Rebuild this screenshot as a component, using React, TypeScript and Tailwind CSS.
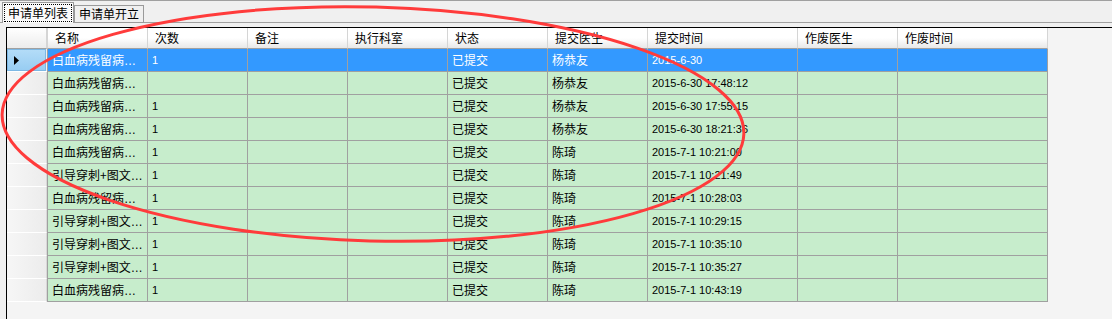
import React from "react";

const cjk = '"Noto Sans CJK SC", "Liberation Sans", sans-serif';
const lat = '"Liberation Sans", "Noto Sans CJK SC", sans-serif';

type Row = [string, string, string, string, string, string, string, string, string];

const rows: Row[] = [
  ["白血病残留病…", "1", "", "", "已提交", "杨恭友", "2015-6-30", "", ""],
  ["白血病残留病…", "", "", "", "已提交", "杨恭友", "2015-6-30 17:48:12", "", ""],
  ["白血病残留病…", "1", "", "", "已提交", "杨恭友", "2015-6-30 17:55:15", "", ""],
  ["白血病残留病…", "1", "", "", "已提交", "杨恭友", "2015-6-30 18:21:36", "", ""],
  ["白血病残留病…", "1", "", "", "已提交", "陈琦", "2015-7-1 10:21:00", "", ""],
  ["引导穿刺+图文…", "1", "", "", "已提交", "陈琦", "2015-7-1 10:21:49", "", ""],
  ["白血病残留病…", "1", "", "", "已提交", "陈琦", "2015-7-1 10:28:03", "", ""],
  ["引导穿刺+图文…", "1", "", "", "已提交", "陈琦", "2015-7-1 10:29:15", "", ""],
  ["引导穿刺+图文…", "1", "", "", "已提交", "陈琦", "2015-7-1 10:35:10", "", ""],
  ["引导穿刺+图文…", "1", "", "", "已提交", "陈琦", "2015-7-1 10:35:27", "", ""],
  ["白血病残留病…", "1", "", "", "已提交", "陈琦", "2015-7-1 10:43:19", "", ""],
];

const headers = ["名称", "次数", "备注", "执行科室", "状态", "提交医生", "提交时间", "作废医生", "作废时间"];
const widths = ["w-[100px]", "w-[100px]", "w-[100px]", "w-[100px]", "w-[100px]", "w-[100px]", "w-[150px]", "w-[100px]", "w-[151px]"];

function isAscii(s: string) {
  return /^[\x00-\x7f]*$/.test(s);
}

function CellText({ text, selected }: { text: string; selected: boolean }) {
  if (!text) return null;
  const color = selected ? "text-white" : "text-black";
  if (isAscii(text)) {
    return (
      <span className={`whitespace-nowrap text-[11px] ${color}`} style={{ fontFamily: lat }}>
        {text}
      </span>
    );
  }
  const hasEllipsis = text.endsWith("…");
  const body = hasEllipsis ? text.slice(0, -1) : text;
  return (
    <span className={`whitespace-nowrap text-[12px] ${color}`} style={{ fontFamily: cjk }}>
      {body}
      {hasEllipsis && (
        <span className="text-[12px]" style={{ fontFamily: lat }}>
          …
        </span>
      )}
    </span>
  );
}

export default function App() {
  return (
    <div className="relative w-[1112px] h-[319px] overflow-hidden bg-[#f0f0f0] border-t border-[#a0a0a0]" style={{ fontFamily: cjk }}>
      {/* tabs */}
      <div className="flex items-end h-[22px]">
        <div className="w-[2px] h-full border-b border-[#a0a0a0]" />
        <div className="w-[72px] h-[21px] bg-[#fafafa] border-l border-t border-r border-[#9a9a9a] p-[1px]">
          <div className="w-full h-[18px] border border-dotted border-black flex items-center justify-center">
            <span className="text-[12px] leading-none text-black whitespace-nowrap">申请单列表</span>
          </div>
        </div>
        <div className="w-[70px] h-[18px] bg-[#f0f0f0] border border-[#9a9a9a] flex items-center justify-center">
          <span className="text-[12px] leading-none text-black whitespace-nowrap">申请单开立</span>
        </div>
        <div className="flex-1 h-full border-b border-[#a0a0a0]" />
      </div>

      {/* panel */}
      <div className="pt-[4px] pl-[6px]">
        <div className="h-[300px] bg-[#f4f4f4] border-l border-t border-black">
          {/* header */}
          <div className="flex h-[21px]">
            <div className="w-[40px] h-full bg-gradient-to-b from-white to-[#ececec] border-r border-[#d5d5d5] border-b border-b-[#a0a0a0]" />
            {headers.map((h, i) => (
              <div
                key={h}
                className={`${widths[i]} h-full bg-gradient-to-b from-white via-white to-[#e8e8e8] border-l border-[#d5d5d5] border-b border-b-[#a0a0a0] ${i === 8 ? "border-r border-r-[#d5d5d5]" : ""} flex items-center pl-[7px]`}
              >
                <span className="text-[12px] leading-none text-black whitespace-nowrap">{h}</span>
              </div>
            ))}
          </div>
          {/* rows */}
          {rows.map((r, ri) => {
            const sel = ri === 0;
            return (
              <div key={ri} className="flex h-[23px]">
                {sel ? (
                  <div className="w-[40px] h-full border-b border-white bg-[#f0f0f0] pr-[1px]">
                    <div className="w-full h-full bg-gradient-to-b from-[#b3dcf8] to-[#98cdf2] border border-[#7db8e4] flex items-center pl-[6px]">
                      <svg width="5" height="9" viewBox="0 0 5 9">
                        <path d="M0 0 L5 4.5 L0 9 Z" fill="#000" />
                      </svg>
                    </div>
                  </div>
                ) : (
                  <div className="w-[40px] h-full bg-gradient-to-r from-[#f6f6f6] to-[#ececec] border-r border-[#d8d8d8] border-b border-b-white" />
                )}
                {r.map((c, ci) => (
                  <div
                    key={ci}
                    className={`${widths[ci]} h-full ${sel ? "bg-[#3399ff]" : "bg-[#c7edcc]"} border-l border-b border-[#a0a0a0] ${ci === 8 ? "border-r" : ""} flex items-center pl-[4px] overflow-hidden`}
                  >
                    <CellText text={c} selected={sel} />
                  </div>
                ))}
              </div>
            );
          })}
        </div>
      </div>

      {/* red annotation ellipse */}
      <svg className="absolute left-0 top-0 pointer-events-none" width="1112" height="319" viewBox="0 0 1112 319">
        <ellipse cx="373" cy="123" rx="371" ry="117" fill="none" stroke="#ff3b3b" strokeWidth="3" transform="rotate(1.5 373 123)" />
      </svg>
    </div>
  );
}
